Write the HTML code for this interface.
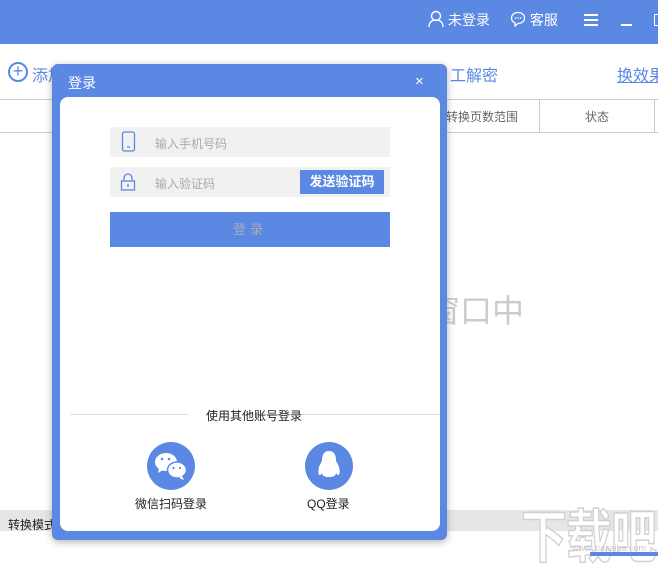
<!DOCTYPE html>
<html><head><meta charset="utf-8"><style>
*{margin:0;padding:0;box-sizing:border-box}
body{width:658px;height:556px;position:relative;overflow:hidden;background:#fff;font-family:"Liberation Sans","Noto Sans CJK SC",sans-serif;}
.a{position:absolute;white-space:nowrap}
</style></head><body>
<div class="a" style="left:0;top:0;width:658px;height:44px;background:#5b88e3"></div>
<div class="a" style="left:428px;top:10px;color:#fff;font-size:14px">
<svg width="16" height="18" style="vertical-align:-3px" viewBox="0 0 16 18"><circle cx="8" cy="6" r="4.5" fill="none" stroke="#fff" stroke-width="1.4"/><path d="M1 17c0-5 3-7 7-7s7 2 7 7" fill="none" stroke="#fff" stroke-width="1.4"/></svg> 未登录</div>
<div class="a" style="left:510px;top:10px;color:#fff;font-size:14px">
<svg width="16" height="16" style="vertical-align:-2px" viewBox="0 0 16 16"><path d="M8 1.5c3.8 0 6.5 2.4 6.5 5.5S11.8 12.5 8 12.5l-3 2.5v-3C2.8 11 1.5 9.2 1.5 7 1.5 3.9 4.2 1.5 8 1.5z" fill="none" stroke="#fff" stroke-width="1.3"/><circle cx="5.5" cy="7" r=".8" fill="#fff"/><circle cx="8" cy="7" r=".8" fill="#fff"/><circle cx="10.5" cy="7" r=".8" fill="#fff"/></svg> 客服</div>
<div class="a" style="left:584px;top:14px;width:14px;height:1.5px;background:#fff;box-shadow:0 5px 0 #fff,0 10px 0 #fff"></div>
<div class="a" style="left:621px;top:24px;width:11px;height:1.5px;background:#fff"></div>
<div class="a" style="left:654px;top:14px;width:6px;height:12px;border:1.5px solid #fff"></div>
<div class="a" style="left:8px;top:62px;width:20px;height:20px;border:2px solid #5b88e3;border-radius:50%;color:#5b88e3;font-size:18px;line-height:15px;text-align:center">+</div>
<div class="a" style="left:32px;top:62px;color:#5b88e3;font-size:16px">添加</div>
<div class="a" style="left:450px;top:62px;color:#5b88e3;font-size:16px">工解密</div>
<div class="a" style="left:617px;top:62px;color:#5b88e3;font-size:16px;text-decoration:underline">换效果</div>
<div class="a" style="left:0;top:99px;width:658px;height:1px;background:#ccc"></div>
<div class="a" style="left:0;top:132px;width:658px;height:1px;background:#ccc"></div>
<div class="a" style="left:539px;top:99px;width:1px;height:33px;background:#ccc"></div>
<div class="a" style="left:654px;top:99px;width:1px;height:33px;background:#ccc"></div>
<div class="a" style="left:446px;top:108px;color:#666;font-size:12px">转换页数范围</div>
<div class="a" style="left:585px;top:108px;color:#666;font-size:12px">状态</div>
<div class="a" style="left:428px;top:286px;color:#ccc;font-size:32px">窗口中</div>
<div class="a" style="left:0;top:510px;width:658px;height:21px;background:#e6e6e6"></div>
<div class="a" style="left:8px;top:516px;color:#222;font-size:12px">转换模式</div>
<div class="a" style="left:521px;top:492px;color:#fff;font-size:46px;font-weight:bold;letter-spacing:-1px;-webkit-text-stroke:1.2px #d0d0d0;transform:scaleY(1.25);transform-origin:top left">下载吧</div>
<div class="a" style="left:572px;top:543px;color:#ccc;font-size:9px">www.xiazaiba.com</div>
<div class="a" style="left:590px;top:552px;width:68px;height:4px;background:#5b88e3"></div>
<div class="a" style="left:52px;top:64px;width:395px;height:476px;background:#5b88e3;border-radius:6px;box-shadow:0 2px 8px rgba(0,0,0,.3)"></div>
<div class="a" style="left:68px;top:73px;color:#fff;font-size:14px">登录</div>
<div class="a" style="left:415px;top:73px;color:#fff;font-size:15px">×</div>
<div class="a" style="left:60px;top:97px;width:380px;height:434px;background:#fff;border-radius:8px"></div>
<div class="a" style="left:110px;top:127px;width:280px;height:30px;background:#f1f1f1"></div>
<svg class="a" style="left:121px;top:131px" width="16" height="22" viewBox="0 0 16 22"><rect x="1.5" y="1" width="12" height="19" rx="2" fill="none" stroke="#5b88e3" stroke-width="1.3"/><path d="M6 16h3" stroke="#5b88e3" stroke-width="1.2"/></svg>
<div class="a" style="left:155px;top:135px;color:#aaa;font-size:12px">输入手机号码</div>
<div class="a" style="left:110px;top:167px;width:280px;height:30px;background:#f1f1f1"></div>
<svg class="a" style="left:120px;top:172px" width="16" height="20" viewBox="0 0 16 20"><path d="M4 9V6a4 4 0 0 1 8 0v3" fill="none" stroke="#5b88e3" stroke-width="1.3"/><rect x="1.5" y="9" width="13" height="9" fill="none" stroke="#5b88e3" stroke-width="1.3"/><path d="M8 12v3" stroke="#5b88e3" stroke-width="1.3"/></svg>
<div class="a" style="left:155px;top:175px;color:#aaa;font-size:12px">输入验证码</div>
<div class="a" style="left:300px;top:170px;width:84px;height:24px;background:#5b88e3;color:#fff;font-size:13px;font-weight:bold;text-align:center;line-height:24px">发送验证码</div>
<div class="a" style="left:110px;top:212px;width:280px;height:35px;background:#5b88e3;color:#aab;font-size:13px;text-align:center;line-height:35px;letter-spacing:4px">登录</div>
<div class="a" style="left:70px;top:414px;width:118px;height:1px;background:#ddd"></div>
<div class="a" style="left:251px;top:414px;width:189px;height:1px;background:#ddd"></div>
<div class="a" style="left:206px;top:407px;color:#222;font-size:12px">使用其他账号登录</div>
<div class="a" style="left:147px;top:442px;width:48px;height:48px;background:#5b88e3;border-radius:50%"></div>
<svg class="a" style="left:153px;top:450px" width="36" height="32" viewBox="0 0 36 32"><ellipse cx="13" cy="12" rx="11" ry="9" fill="#fff"/><path d="M6 18l-1 5 5-3z" fill="#fff"/><circle cx="9" cy="9" r="1.3" fill="#5b88e3"/><circle cx="16" cy="9" r="1.3" fill="#5b88e3"/><ellipse cx="24" cy="20" rx="9.5" ry="8" fill="#fff" stroke="#5b88e3" stroke-width="1.5"/><path d="M29 26l2 4-5-2z" fill="#fff"/><circle cx="20.5" cy="18" r="1.1" fill="#5b88e3"/><circle cx="27" cy="18" r="1.1" fill="#5b88e3"/></svg>
<div class="a" style="left:305px;top:442px;width:48px;height:48px;background:#5b88e3;border-radius:50%"></div>
<svg class="a" style="left:316px;top:449px" width="26" height="34" viewBox="0 0 26 34"><path d="M13 2c5 0 7 4 7 9 0 2 2 4 3 7 1 4 1 8-1 8-1 0-1-1-2-2 0 3-3 4-7 4s-7-1-7-4c-1 1-1 2-2 2-2 0-2-4-1-8 1-3 3-5 3-7 0-5 2-9 7-9z" fill="#fff"/></svg>
<div class="a" style="left:135px;top:495px;color:#222;font-size:12px">微信扫码登录</div>
<div class="a" style="left:307px;top:495px;color:#222;font-size:12px">QQ登录</div>
</body></html>
